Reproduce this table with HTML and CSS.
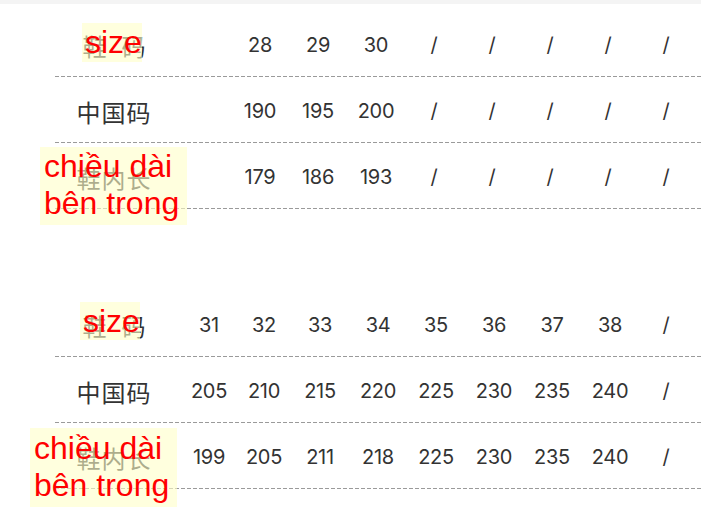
FILE: index.html
```html
<!DOCTYPE html>
<html lang="zh">
<head>
<meta charset="utf-8">
<title>鞋码对照表</title>
<link rel="stylesheet" href="styles.css">
</head>
<body>
<div class="page">
  <div class="topbar"></div>

  <section class="size-table t1">
    <div class="row">
      <div class="label spread">鞋码</div>
      <div class="cell">28</div><div class="cell">29</div><div class="cell">30</div>
      <div class="cell">/</div><div class="cell">/</div><div class="cell">/</div><div class="cell">/</div><div class="cell">/</div>
    </div>
    <div class="row">
      <div class="label">中国码</div>
      <div class="cell">190</div><div class="cell">195</div><div class="cell">200</div>
      <div class="cell">/</div><div class="cell">/</div><div class="cell">/</div><div class="cell">/</div><div class="cell">/</div>
    </div>
    <div class="row">
      <div class="label">鞋内长</div>
      <div class="cell">179</div><div class="cell">186</div><div class="cell">193</div>
      <div class="cell">/</div><div class="cell">/</div><div class="cell">/</div><div class="cell">/</div><div class="cell">/</div>
    </div>
    <div class="note note-size">size</div>
    <div class="note note-length">chiều dài<br>bên trong</div>
  </section>

  <section class="size-table t2">
    <div class="row">
      <div class="label spread">鞋码</div>
      <div class="cell">31</div><div class="cell">32</div><div class="cell">33</div><div class="cell">34</div><div class="cell">35</div>
      <div class="cell">36</div><div class="cell">37</div><div class="cell">38</div><div class="cell">/</div>
    </div>
    <div class="row">
      <div class="label">中国码</div>
      <div class="cell">205</div><div class="cell">210</div><div class="cell">215</div><div class="cell">220</div><div class="cell">225</div>
      <div class="cell">230</div><div class="cell">235</div><div class="cell">240</div><div class="cell">/</div>
    </div>
    <div class="row">
      <div class="label">鞋内长</div>
      <div class="cell">199</div><div class="cell">205</div><div class="cell">211</div><div class="cell">218</div><div class="cell">225</div>
      <div class="cell">230</div><div class="cell">235</div><div class="cell">240</div><div class="cell">/</div>
    </div>
    <div class="note note-size">size</div>
    <div class="note note-length">chiều dài<br>bên trong</div>
  </section>
</div>
</body>
</html>
```

FILE: styles.css
```css
html, body {
  margin: 0;
  padding: 0;
  background: #ffffff;
}

.page {
  width: 701px;
  height: 525px;
  overflow: hidden;
  background: #ffffff;
  font-family: "Inter", "Noto Sans CJK SC", sans-serif;
  color: #333333;
}

.topbar {
  height: 4px;
  background: #f4f4f4;
}

.size-table {
  position: relative;
}

.t1 {
  margin-top: 7px;
}

.t2 {
  margin-top: 82px;
}

.row {
  display: grid;
  align-items: center;
  margin-left: 55px;
  height: 66px;
  box-sizing: border-box;
  padding-top: 3px;
  padding-bottom: 1px;
  background: repeating-linear-gradient(to right, #9a9a9a 0 4px, transparent 4px 6px) left bottom / 100% 1px no-repeat;
}

.t1 .row {
  grid-template-columns: 176px repeat(8, 58px);
}

.t2 .row {
  grid-template-columns: 126px 56px 54px repeat(6, 58px) 54px;
}

.label {
  font-family: "Noto Sans CJK SC", sans-serif;
  font-size: 24px;
  letter-spacing: 1px;
  text-align: center;
  width: 118px;
  color: #333333;
}

.label.spread {
  letter-spacing: 15px;
  text-indent: 15px;
}

.cell {
  text-align: center;
  font-size: 20px;
  letter-spacing: -0.3px;
  color: #333333;
}

.note {
  position: absolute;
  box-sizing: border-box;
  background: rgba(255, 255, 200, 0.6);
  color: #ff0000;
  font-family: "Liberation Sans", Arial, sans-serif;
  font-size: 32px;
  line-height: 37px;
  white-space: nowrap;
}

.note-size {
  width: 60px;
  height: 39px;
  padding: 1px 0 0 3px;
}

.note-length {
  width: 147px;
  height: 78px;
  padding: 1px 0 0 4px;
}

.t1 .note-size {
  left: 82px;
  top: 12px;
}

.t1 .note-length {
  left: 40px;
  top: 136px;
}

.t2 .note-size {
  left: 80px;
  top: 11px;
  height: 38px;
}

.t2 .note-length {
  left: 30px;
  top: 137px;
  height: 79px;
  padding-top: 2px;
}
```
